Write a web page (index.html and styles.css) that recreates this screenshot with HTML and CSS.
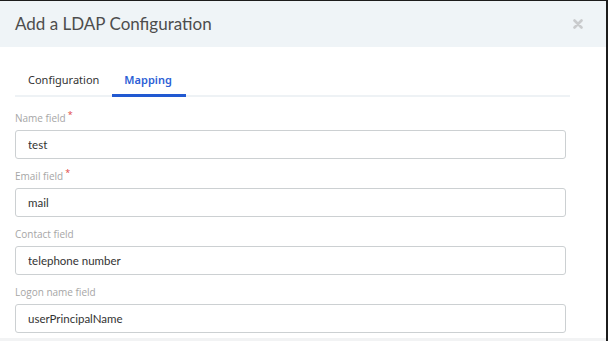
FILE: index.html
```html
<!DOCTYPE html>
<html lang="en">
<head>
  <meta charset="UTF-8" />
  <meta name="viewport" content="width=device-width, initial-scale=1.0"/>
  <title>Add a LDAP Configuration</title>
  <link rel="stylesheet" href="styles.css">
</head>
<body>
  <div class="modal">
    <div class="modal-header">
      <h1>Add a LDAP Configuration</h1>
      <svg class="close" width="10" height="10" viewBox="0 0 10 10">
        <path d="M1.5 1.5 L8.5 8.5 M8.5 1.5 L1.5 8.5" stroke="#c9cbcd" stroke-width="2.6" stroke-linecap="round"/>
      </svg>
    </div>

    <div class="modal-body">
      <div class="tabs">
        <span class="tab">Configuration</span>
        <span class="tab active">Mapping</span>
      </div>

      <div class="field">
        <label>Name field<span class="req">*</span></label>
        <input type="text" value="test">
      </div>
      <div class="field">
        <label>Email field<span class="req">*</span></label>
        <input type="text" value="mail">
      </div>
      <div class="field">
        <label>Contact field</label>
        <input type="text" value="telephone number">
      </div>
      <div class="field">
        <label>Logon name field</label>
        <input type="text" value="userPrincipalName">
      </div>
    </div>

    <div class="modal-footer"></div>
  </div>
</body>
</html>
```

FILE: styles.css
```css
html, body {
  margin: 0;
  height: 100%;
  overflow: hidden;
}
body {
  background: #1c1c1c;
  font-family: Lato, "Open Sans", sans-serif;
  color: #333;
}
.modal {
  margin: 1px 2px 0 0;
  background: #fff;
  height: 340px;
  display: flex;
  flex-direction: column;
}
.modal-header {
  flex-shrink: 0;
  background: #eff4f7;
  height: 46px;
  display: flex;
  align-items: center;
  justify-content: space-between;
  padding: 0 23px 0 15px;
}
.modal-header h1 {
  margin: 0;
  font-family: Lato, sans-serif;
  font-size: 17px;
  font-weight: normal;
  color: #4d4d4d;
  padding-bottom: 1px;
}
.close {
  display: block;
}
.modal-body {
  flex: 1;
  padding: 0 36px 0 15px;
}
.tabs {
  display: flex;
  margin-top: 21px;
  border-bottom: 2px solid #eef2f5;
}
.tab {
  font-family: "Noto Sans", sans-serif;
  font-size: 11px;
  line-height: 15px;
  color: #333;
  padding: 4px 13px 7px 13px;
  margin-bottom: -2px;
  border-bottom: 3px solid transparent;
}
.tab.active {
  padding: 4px 14px 7px 12px;
  color: #2c5fd6;
  font-weight: 600;
  border-bottom-color: #2159d1;
}
.field {
  margin-top: 14px;
}
.field + .field {
  margin-top: 10px;
}
.field label {
  display: block;
  font-family: "Open Sans", sans-serif;
  font-size: 10px;
  color: #a6a6a6;
  line-height: 14px;
  margin-bottom: 5px;
}
.req {
  color: #e0443f;
  font-size: 9px;
  line-height: 0;
  vertical-align: 4px;
  margin-left: 2px;
}
.field input {
  display: block;
  box-sizing: border-box;
  width: 551px;
  height: 29px;
  border: 1px solid #ccd0d2;
  border-radius: 3px;
  padding: 0 12px;
  font-family: Lato, sans-serif;
  font-size: 11.5px;
  color: #333;
}
.modal-footer {
  flex-shrink: 0;
  background: #f2f3f4;
  height: 3px;
}
```
